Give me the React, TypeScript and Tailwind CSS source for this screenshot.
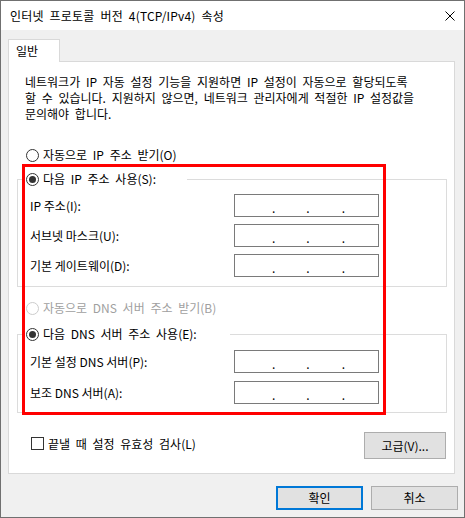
import React from 'react';

interface RadioProps {
  checked?: boolean;
  disabled?: boolean;
}

function Radio({ checked, disabled }: RadioProps) {
  return (
    <span
      className={
        disabled
          ? 'w-[13px] h-[13px] rounded-full border border-[#cccccc] bg-white flex items-center justify-center shrink-0'
          : 'w-[13px] h-[13px] rounded-full border border-[#333333] bg-white flex items-center justify-center shrink-0'
      }
    >
      {checked && <span className="w-[7px] h-[7px] rounded-full bg-[#333333]" />}
    </span>
  );
}

function IpField() {
  return (
    <div className="w-[145px] h-[23px] border border-[#7a7a7a] bg-white flex items-center leading-none">
      <span className="w-[37px]" />
      <span className="pt-[4px]">.</span>
      <span className="w-[31px]" />
      <span className="pt-[4px]">.</span>
      <span className="w-[32px]" />
      <span className="pt-[4px]">.</span>
    </div>
  );
}

function FieldRow({ label }: { label: string }) {
  return (
    <div className="h-[23px] flex items-center">
      <span className="w-[216px] pl-[12px]">{label}</span>
      <IpField />
    </div>
  );
}

export default function App() {
  return (
    <div className="relative w-[465px] h-[518px] border border-[#707070] bg-[#f0f0f0] flex flex-col overflow-hidden font-['Noto_Sans_CJK_KR',sans-serif] text-[12px] text-black">
      {/* Title bar */}
      <div className="h-[29px] bg-white flex items-center justify-between pl-[9px] pr-[9px]">
        <span className="[word-spacing:3px] tracking-[0.2px]">인터넷 프로토콜 버전 4(TCP/IPv4) 속성</span>
        <svg width="10" height="10" viewBox="0 0 10 10">
          <path d="M0.5 0.5 L9.5 9.5 M9.5 0.5 L0.5 9.5" stroke="#000" strokeWidth="1" />
        </svg>
      </div>

      <div className="flex flex-col pt-[9px] pl-[7px]">
        {/* Tab */}
        <div className="relative z-10 -mb-px w-[52px] h-[23px] border-t border-x border-[#d9d9d9] bg-white pl-[7px] flex items-center">
          일반
        </div>

        {/* Panel */}
        <div className="w-[447px] h-[413px] border border-[#d9d9d9] bg-white flex flex-col">
          <p className="ml-[16px] mt-[12px] leading-[16px] whitespace-nowrap [word-spacing:3px]">
            네트워크가 IP 자동 설정 기능을 지원하면 IP 설정이 자동으로 할당되도록
            <br />
            할 수 있습니다. 지원하지 않으면, 네트워크 관리자에게 적절한 IP 설정값을
            <br />
            문의해야 합니다.
          </p>

          <div className="ml-[17px] mt-[25px] h-[16px] flex items-center gap-[4px] [word-spacing:3px]">
            <Radio />
            <span>자동으로 IP 주소 받기(O)</span>
          </div>

          <fieldset className="ml-[8px] mt-[8px] w-[430px] border border-[#dcdcdc] pb-[9px]">
            <legend className="ml-[5px] w-[164px] pl-[3px]">
              <div className="h-[16px] flex items-center gap-[4px] [word-spacing:3px]">
                <Radio checked />
                <span>다음 IP 주소 사용(S):</span>
              </div>
            </legend>
            <div className="mt-[7px] flex flex-col gap-[7px]">
              <FieldRow label="IP 주소(I):" />
              <FieldRow label="서브넷 마스크(U):" />
              <FieldRow label="기본 게이트웨이(D):" />
            </div>
          </fieldset>

          <div className="ml-[17px] mt-[13px] h-[16px] flex items-center gap-[4px] text-[#a0a0a0] [word-spacing:3px]">
            <Radio disabled />
            <span>자동으로 DNS 서버 주소 받기(B)</span>
          </div>

          <fieldset className="ml-[8px] mt-[10px] w-[430px] border border-[#dcdcdc] pb-[8px]">
            <legend className="ml-[5px] w-[207px] pl-[3px]">
              <div className="h-[16px] flex items-center gap-[4px] [word-spacing:3px]">
                <Radio checked />
                <span>다음 DNS 서버 주소 사용(E):</span>
              </div>
            </legend>
            <div className="mt-[8px] flex flex-col gap-[8px]">
              <FieldRow label="기본 설정 DNS 서버(P):" />
              <FieldRow label="보조 DNS 서버(A):" />
            </div>
          </fieldset>

          <div className="mt-[19px] flex items-start justify-between">
            <div className="ml-[22px] mt-[5px] h-[13px] flex items-center gap-[4px] [word-spacing:3px]">
              <span className="w-[13px] h-[13px] border border-[#333333] bg-white shrink-0" />
              <span>끝낼 때 설정 유효성 검사(L)</span>
            </div>
            <button className="mr-[8px] w-[82px] h-[27px] border border-[#adadad] bg-[#e1e1e1]">
              고급(V)...
            </button>
          </div>
        </div>
      </div>

      {/* Dialog buttons */}
      <div className="mt-[12px] pr-[6px] flex justify-end gap-[8px]">
        <button className="w-[87px] h-[24px] border-2 border-[#0078d7] bg-[#e1e1e1]">확인</button>
        <button className="w-[87px] h-[24px] border border-[#adadad] bg-[#e1e1e1]">취소</button>
      </div>

      {/* Annotation highlight */}
      <div className="absolute left-[21px] top-[163px] w-[364px] h-[251px] border-[3px] border-[#ff0000] pointer-events-none" />
    </div>
  );
}
